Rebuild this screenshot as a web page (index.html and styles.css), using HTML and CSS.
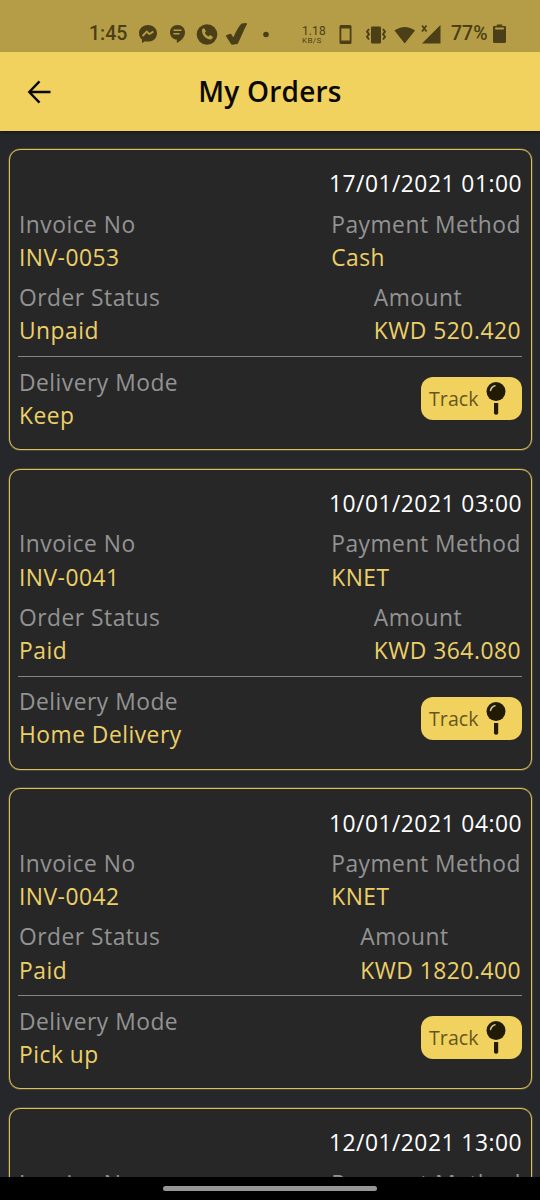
FILE: index.html
```html
<!DOCTYPE html>
<html lang="en">
<head>
<meta charset="utf-8">
<title>My Orders</title>
<link rel="stylesheet" href="styles.css">
</head>
<body>
<div class="screen">
  <div class="statusbar">
    <span class="clock">1:45</span>
    <svg class="status-icons" width="135" height="28" viewBox="0 0 135 28" fill="currentColor">
      <path d="M10 5C4.600 5 1 8.700 1 13.300c0 2.600 1.100 4.700 3 6.200V23l3.200-1.800c.9.200 1.800.4 2.800.4 5.400 0 9-3.700 9-8.300S15.400 5 10 5z"/>
      <path d="M4.500 16l4.300-4.400 2.600 2.500 4-2.500" fill="none" stroke="#b59d47" stroke-width="1.800"/>
      <path d="M39.500 5c-4.400 0-7.500 3.200-7.500 7.300s3.100 7.300 6.800 7.300V23c4.800-2.200 8.200-6 8.200-10.700C47 8.200 43.900 5 39.500 5z"/>
      <path d="M35.500 10.300h8M35.500 13.800h6" fill="none" stroke="#b59d47" stroke-width="1.500"/>
      <circle cx="69" cy="14.500" r="10.300"/>
      <path d="M64 9.500l2-1.500 2 3.200-1.200 1.500c.8 1.800 2 3 3.700 3.700l1.500-1.300 3 2-1.300 2.200c-5 1.200-10.500-4.500-9.700-9.800z" fill="#b59d47"/>
      <path d="M89 16l3.500-1.200 3 4.700C98.500 12.500 101 7.500 104 4.500l4-.5c-3.500 6-5.500 12.500-9 19l-5 .7z" stroke="currentColor" stroke-width="2" stroke-linejoin="round"/>
      <circle cx="128" cy="14.500" r="2.800"/>
    </svg>
    <div class="speed"><span>1.18</span><small>KB/S</small></div>
    <svg class="signal-icons" width="102" height="26" viewBox="0 0 102 26" fill="currentColor">
      <path fill-rule="evenodd" d="M2 4h9q1.500 0 1.500 1.500v16Q12.500 23 11 23H2Q.5 23 .5 21.500v-16Q.5 4 2 4zm.3 3.500v12h8.400v-12z"/>
      <rect x="32" y="5.500" width="10" height="17" rx="1.200"/>
      <path d="M30 8l-2 2.700 2 2.500-2 2.500 2 2.800M44 8l2 2.700-2 2.500 2 2.500-2 2.800" fill="none" stroke="currentColor" stroke-width="1.900"/>
      <path d="M55.500 9.500C62 4.800 69.500 4.800 76 9.500L65.700 22.500z"/>
      <path d="M101.500 4v18.500H83z"/>
      <path d="M83 4.500l4.500 6M87.500 4.500l-4.500 6" stroke="currentColor" stroke-width="1.700"/>
    </svg>
    <span class="percent">77%</span>
    <svg class="battery" width="13" height="20" viewBox="0 0 12 20" preserveAspectRatio="none" fill="currentColor">
      <path fill-rule="evenodd" d="M3.500 .5h5v1.500H11q1 0 1 1V17.500q0 1.500-1.500 1.500h-9Q0 19 0 17.500V3q0-1 1-1h2.500zM2 3.500V5.500h8V3.500z"/>
    </svg>
  </div>
  <header class="appbar">
    <svg class="back" width="24" height="24" viewBox="0 0 24 24" fill="none" stroke="currentColor" stroke-width="2.400"><path d="M12.500 1.300L2.300 12l10.200 10.700M2.300 12H23.500"/></svg>
    <h1>My Orders</h1>
  </header>
  <main class="orders" id="orders">
    <article class="card">
      <time class="date">17/01/2021 01:00</time>
      <div class="row"><div class="field"><span class="label">Invoice No</span><span class="value">INV-0053</span></div><div class="field"><span class="label">Payment Method</span><span class="value">Cash</span></div></div>
      <div class="row"><div class="field"><span class="label">Order Status</span><span class="value">Unpaid</span></div><div class="field"><span class="label">Amount</span><span class="value">KWD 520.420</span></div></div>
      <div class="row delivery"><div class="field"><span class="label">Delivery Mode</span><span class="value">Keep</span></div>
        <button class="track">Track <svg width="22" height="35" viewBox="0 0 22 35"><circle cx="11" cy="10.500" r="9.500"/><path class="shine" d="M5.500 9.500Q6.500 5.500 10 4.700"/><path d="M9 22h4.200v10.500q-2 2.500-4.200 0z"/></svg></button></div>
    </article>
    <article class="card">
      <time class="date">10/01/2021 03:00</time>
      <div class="row"><div class="field"><span class="label">Invoice No</span><span class="value">INV-0041</span></div><div class="field"><span class="label">Payment Method</span><span class="value">KNET</span></div></div>
      <div class="row"><div class="field"><span class="label">Order Status</span><span class="value">Paid</span></div><div class="field"><span class="label">Amount</span><span class="value">KWD 364.080</span></div></div>
      <div class="row delivery"><div class="field"><span class="label">Delivery Mode</span><span class="value">Home Delivery</span></div>
        <button class="track">Track <svg width="22" height="35" viewBox="0 0 22 35"><circle cx="11" cy="10.500" r="9.500"/><path class="shine" d="M5.500 9.500Q6.500 5.500 10 4.700"/><path d="M9 22h4.200v10.500q-2 2.500-4.200 0z"/></svg></button></div>
    </article>
    <article class="card">
      <time class="date">10/01/2021 04:00</time>
      <div class="row"><div class="field"><span class="label">Invoice No</span><span class="value">INV-0042</span></div><div class="field"><span class="label">Payment Method</span><span class="value">KNET</span></div></div>
      <div class="row"><div class="field"><span class="label">Order Status</span><span class="value">Paid</span></div><div class="field"><span class="label">Amount</span><span class="value">KWD 1820.400</span></div></div>
      <div class="row delivery"><div class="field"><span class="label">Delivery Mode</span><span class="value">Pick up</span></div>
        <button class="track">Track <svg width="22" height="35" viewBox="0 0 22 35"><circle cx="11" cy="10.500" r="9.500"/><path class="shine" d="M5.500 9.500Q6.500 5.500 10 4.700"/><path d="M9 22h4.200v10.500q-2 2.500-4.200 0z"/></svg></button></div>
    </article>
    <article class="card">
      <time class="date">12/01/2021 13:00</time>
      <div class="row"><div class="field"><span class="label">Invoice No</span></div><div class="field"><span class="label">Payment Method</span></div></div>
    </article>
  </main>
  <nav class="navbar"><span class="handle"></span></nav>
</div>
</body>
</html>
```
FILE: styles.css
```css
* { box-sizing: border-box; }
body { margin: 0; background: #25272a; }
.screen {
  width: 540px; height: 1200px; overflow: hidden;
  display: flex; flex-direction: column;
  font-family: "Open Sans", sans-serif;
}
.statusbar {
  height: 52px; flex: none; display: flex; align-items: center;
  padding: 16px 0 0 89px;
  background: #b59d47; color: #4a3f16;
  font: 500 19.500px/36px Roboto, sans-serif;
}
.statusbar svg { flex: none; }
.clock { width: 49px; }
.speed {
  width: 37px; margin-left: 29px; padding-top: 2px;
  display: flex; flex-direction: column;
  font-size: 12px; line-height: 10px; font-weight: 400; letter-spacing: .1px;
}
.speed small { font-size: 8px; line-height: 9px; letter-spacing: .4px; }
.percent { margin-left: 10px; width: 42px; }
.appbar {
  height: 79px; flex: none; display: grid; align-items: center;
  grid-template-columns: 72px 1fr 72px;
  background: #f1d25e; color: #0b0902;
  box-shadow: 0 1px 4px #0008;
}
.statusbar, .appbar { position: relative; }
.appbar { z-index: 1; }
.statusbar { z-index: 2; }
.back { margin-left: 27px; }
h1 {
  margin: 0 0 2px; text-align: center;
  font-size: 28px; line-height: 36px; font-weight: 600; letter-spacing: .2px;
}
.orders {
  flex: 1; min-height: 0; overflow: hidden;
  display: flex; flex-direction: column; gap: 18.600px;
  padding: 18px 8.500px 0;
}
.card {
  flex: none; height: 301px; padding: 17.400px 9.500px 0;
  border: 1px solid #dcc15b; border-radius: 11px; background: #272727;
  box-shadow: 0 0 0 .5px #dcc15b66;
  display: flex; flex-direction: column;
  font-size: 22.800px; line-height: 33.300px; letter-spacing: .5px;
}
.date { align-self: flex-end; color: #fff; margin: 0 -1px 7.200px 0; }
.row { display: flex; justify-content: space-between; margin-bottom: 6.700px; }
.field { display: flex; flex-direction: column; }
.label { color: #939393; }
.value { color: #ecd067; }
.delivery { border-top: 1px solid #858585; padding-top: 8.600px; margin: 1.500px -1px 0; padding-left: 1px; }
.track {
  width: 101px; height: 43px; margin-top: 11.500px; padding: 0 15px 0 8px;
  display: flex; align-items: center; justify-content: space-between;
  border: 0; border-radius: 12px; background: #f1d25e; color: #65561f;
  font: 19.500px "Open Sans", sans-serif; letter-spacing: .1px;
}
.track svg { fill: #211a05; }
.track .shine { fill: none; stroke: #d8c67f; stroke-width: 1.500; stroke-linecap: round; }
.navbar { height: 23px; flex: none; background: #000; display: flex; justify-content: center; }
.handle { width: 214px; height: 5px; margin-top: 9px; border-radius: 3px; background: #969696; }
```
